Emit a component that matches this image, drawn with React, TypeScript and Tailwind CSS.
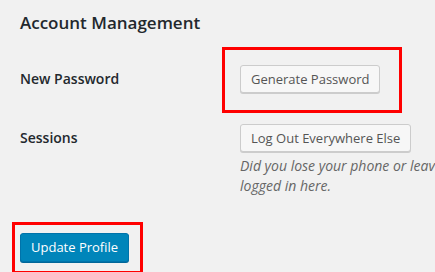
import React from 'react';

export default function App() {
  const btn =
    "h-[28px] px-[10px] text-[13px] leading-[26px] text-[#555] bg-[#f7f7f7] border border-[#ccc] rounded-[3px] shadow-[0_1px_0_#ccc] whitespace-nowrap";

  return (
    <div className="relative w-[435px] h-[272px] overflow-hidden bg-[#f1f1f1] font-['Open_Sans',sans-serif] text-[#23282d]">
      <div className="pl-[20px] pt-[9px]">
        {/* Heading */}
        <h2 className="text-[17px] font-semibold leading-[28px]">Account Management</h2>

        {/* New Password */}
        <div className="flex mt-[28px]">
          <div className="w-[220px] shrink-0 text-[14px] font-semibold leading-[28px]">New Password</div>
          <div className="relative">
            <button className={btn}>Generate Password</button>
            <div className="absolute left-[-18px] top-[-18px] w-[180px] h-[66px] border-[3px] border-[#ff0000]" />
          </div>
        </div>

        {/* Sessions */}
        <div className="flex mt-[31px]">
          <div className="w-[220px] shrink-0 text-[14px] font-semibold leading-[28px]">Sessions</div>
          <div className="min-w-0 overflow-hidden">
            <button className={btn}>Log Out Everywhere Else</button>
            <p className="mt-[4px] text-[14px] italic leading-[20px] text-[#666] whitespace-nowrap">
              Did you lose your phone or leave your account
              <br />
              logged in here.
            </p>
          </div>
        </div>

        {/* Submit */}
        <div className="relative mt-[37px] w-fit">
          <button className="h-[29px] px-[10px] text-[13px] leading-[27px] text-white bg-[#0085ba] border border-[#0073aa] rounded-[3px] shadow-[0_1px_0_#006799]">
            Update Profile
          </button>
          <div className="absolute left-[-8px] top-[-11px] w-[131px] h-[52px] border-[3px] border-[#ff0000]" />
        </div>
      </div>
    </div>
  );
}
